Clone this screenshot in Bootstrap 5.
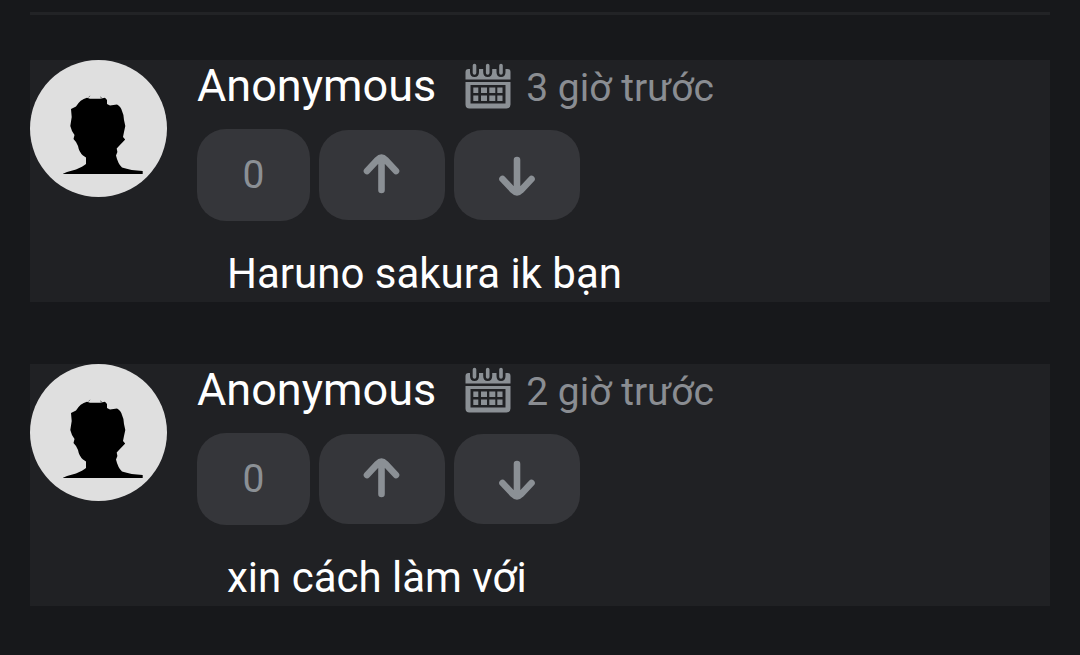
<!DOCTYPE html>
<html lang="vi">
<head>
<meta charset="utf-8">
<meta name="viewport" content="width=device-width, initial-scale=1">
<title>Bình luận</title>
<link href="https://cdn.jsdelivr.net/npm/bootstrap@5.3.0/dist/css/bootstrap.min.css" rel="stylesheet">
<style>
  body { background: #17181b; color: #fff; font-family: Roboto, "Noto Sans", sans-serif; }
  .thread { padding: 12px 30px 48px; }
  .divider { border: 0; border-top: 3px solid #222326; opacity: 1; margin: 0 0 45px; }
  .comments { gap: 62px; }
  .comment { background: #202124; gap: 30px; }
  .avatar { width: 137px; height: 137px; background: #dfdfdf; }
  .comment-head { margin-bottom: 17px; }
  .author { font-size: 45px; font-weight: 400; line-height: 52px; margin-right: 29px; }
  .calendar { width: 46px; height: 46px; margin-right: 15px; color: #8b9095; }
  .posted { font-size: 39px; line-height: 46px; color: #8a8d92; }
  .votes { gap: 9px; margin-bottom: 25px; }
  .score, .vote { background: #35363a; color: #8b9095; border-radius: 29px; }
  .score { width: 113px; height: 92px; font-size: 39px; }
  .vote { width: 126px; height: 90px; }
  .vote:hover, .vote:focus-visible { background: #404146; color: #b4b8bd; }
  .message { font-size: 42px; line-height: 56px; padding-left: 30px; }
</style>
</head>
<body>

<svg class="d-none" xmlns="http://www.w3.org/2000/svg">
  <symbol id="person" viewBox="0 0 137 137">
    <path d="M33 113.700 L37 112 L46 109.500 Q53 106.500 56 104 V97.500 L53 95.500 Q49 92 48 86 L46 82 L43.500 79 L44.500 75 L42 71 L40.300 66 L41.700 57 L41 49 L46 46.500 Q50 39.500 57 37.700 L60 38.700 H70 L75 37.700 L77 40 V44 L80 45.500 L87 44.500 Q91 46.500 92 51 Q94 55 94 60 L95.300 66 L94 72 L93 77 L95.200 79.500 L89 86 L86.700 88.500 L87.400 92 L86 95.500 Q88 104 92 107.500 Q101 110.500 112.700 111 V114 H33Z"/>
    <path d="M58.500 37.500 L60 35.800 M70 36.800 L72 38" fill="none" stroke="#777" stroke-width="1"/>
  </symbol>
  <symbol id="calendar" viewBox="0 0 46 46">
    <path fill="currentColor" d="M.5 16.500 V9 Q.5 6 3.500 6 H5 V9 Q5 14 9.500 14 Q14 14 14 9 V6 H18.200 V9 Q18.200 14 22.700 14 Q27.200 14 27.200 9 V6 H31.500 V9 Q31.500 14 36 14 Q40.500 14 40.500 9 V6 H42.500 Q45.500 6 45.500 9 V16.500Z"/>
    <path d="M9.500 2.500 V10 M22.700 2.500 V10 M36 2.500 V10" fill="none" stroke="currentColor" stroke-width="3.600" stroke-linecap="round"/>
    <path fill="currentColor" fill-rule="evenodd" d="M.5 19 H45.500 V41.500 Q45.500 45.500 41.500 45.500 H4.500 Q.5 45.500 .5 41.500Z M5.500 22 V40.500 H40.500 V22Z"/>
    <path fill="currentColor" d="M8.300 24.500h5v5.500h-5z M16 24.500h6v5.500h-6z M24.300 24.500h6v5.500h-6z M32.300 24.500h5.200v5.500h-5.200z M8.300 32.500h5v5.500h-5z M16 32.500h6v5.500h-6z M24.300 32.500h6v5.500h-6z M32.300 32.500h5.200v5.500h-5.200z"/>
  </symbol>
  <symbol id="arrow-up" viewBox="0 0 40 44">
    <path d="M19.500 37 V5 M5 18 L15.500 6.800 Q19.500 2.800 23.500 6.800 L34 18" fill="none" stroke="currentColor" stroke-width="6.600" stroke-linecap="round" stroke-linejoin="round"/>
  </symbol>
  <symbol id="arrow-down" viewBox="0 0 40 44">
    <path d="M20 7 V39 M5.500 26 L16 37.200 Q20 41.200 24 37.200 L34.500 26" fill="none" stroke="currentColor" stroke-width="6.600" stroke-linecap="round" stroke-linejoin="round"/>
  </symbol>
</svg>

<main class="thread container-fluid">
  <hr class="divider">
  <div class="comments d-flex flex-column">

    <article class="comment d-flex align-items-start">
      <svg class="avatar rounded-circle flex-shrink-0" role="img" aria-label="Anonymous"><use href="#person"/></svg>
      <div class="flex-grow-1">
        <header class="comment-head d-flex align-items-baseline">
          <h2 class="author mb-0">Anonymous</h2>
          <svg class="calendar align-self-center" aria-hidden="true"><use href="#calendar"/></svg>
          <time class="posted">3 giờ trước</time>
        </header>
        <div class="votes d-flex align-items-center">
          <span class="score d-flex align-items-center justify-content-center">0</span>
          <button type="button" class="vote btn border-0 p-0 d-flex align-items-center justify-content-center" aria-label="Thích"><svg width="40" height="44"><use href="#arrow-up"/></svg></button>
          <button type="button" class="vote btn border-0 p-0 d-flex align-items-center justify-content-center" aria-label="Không thích"><svg width="40" height="44"><use href="#arrow-down"/></svg></button>
        </div>
        <p class="message mb-0">Haruno sakura ik bạn</p>
      </div>
    </article>

    <article class="comment d-flex align-items-start">
      <svg class="avatar rounded-circle flex-shrink-0" role="img" aria-label="Anonymous"><use href="#person"/></svg>
      <div class="flex-grow-1">
        <header class="comment-head d-flex align-items-baseline">
          <h2 class="author mb-0">Anonymous</h2>
          <svg class="calendar align-self-center" aria-hidden="true"><use href="#calendar"/></svg>
          <time class="posted">2 giờ trước</time>
        </header>
        <div class="votes d-flex align-items-center">
          <span class="score d-flex align-items-center justify-content-center">0</span>
          <button type="button" class="vote btn border-0 p-0 d-flex align-items-center justify-content-center" aria-label="Thích"><svg width="40" height="44"><use href="#arrow-up"/></svg></button>
          <button type="button" class="vote btn border-0 p-0 d-flex align-items-center justify-content-center" aria-label="Không thích"><svg width="40" height="44"><use href="#arrow-down"/></svg></button>
        </div>
        <p class="message mb-0">xin cách làm với</p>
      </div>
    </article>

  </div>
</main>

<script src="https://cdn.jsdelivr.net/npm/bootstrap@5.3.0/dist/js/bootstrap.bundle.min.js"></script>
</body>
</html>
